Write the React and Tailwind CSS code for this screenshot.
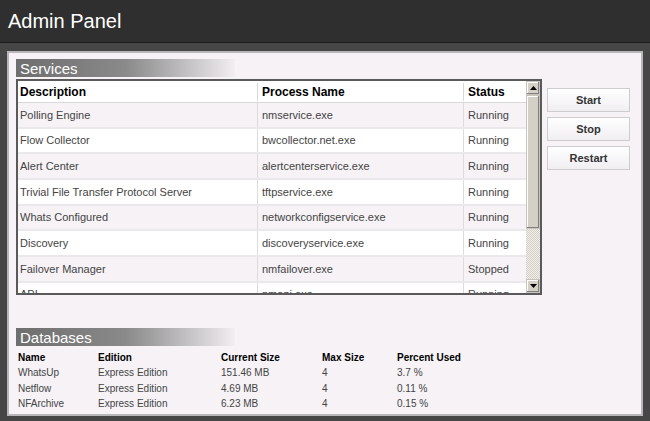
const services = [
  { name: 'Polling Engine', process: 'nmservice.exe', status: 'Running' },
  { name: 'Flow Collector', process: 'bwcollector.net.exe', status: 'Running' },
  { name: 'Alert Center', process: 'alertcenterservice.exe', status: 'Running' },
  { name: 'Trivial File Transfer Protocol Server', process: 'tftpservice.exe', status: 'Running' },
  { name: 'Whats Configured', process: 'networkconfigservice.exe', status: 'Running' },
  { name: 'Discovery', process: 'discoveryservice.exe', status: 'Running' },
  { name: 'Failover Manager', process: 'nmfailover.exe', status: 'Stopped' },
  { name: 'API', process: 'nmapi.exe', status: 'Running' },
]

const databases = [
  { name: 'WhatsUp', edition: 'Express Edition', size: '151.46 MB', max: '4', used: '3.7 %' },
  { name: 'Netflow', edition: 'Express Edition', size: '4.69 MB', max: '4', used: '0.11 %' },
  { name: 'NFArchive', edition: 'Express Edition', size: '6.23 MB', max: '4', used: '0.15 %' },
]

function SectionBar({ title }) {
  return (
    <div className="flex h-[18px] w-[219px] items-center bg-gradient-to-r from-[#6e6e6e] via-[#8a8a8a] to-[#f2eef2] pl-[4px] text-[15px] leading-none text-white">
      {title}
    </div>
  )
}

function ScrollArrow({ up }) {
  return (
    <div className="flex h-[14px] w-[14px] items-center justify-center border border-[#c8c4bc] bg-[#d4d0c8] shadow-[inset_-1px_-1px_0_#808080,inset_1px_1px_0_#fff]">
      <svg width="7" height="4" viewBox="0 0 7 4">
        <path d={up ? 'M0 4 L3.5 0 L7 4 Z' : 'M0 0 L3.5 4 L7 0 Z'} fill="#000" />
      </svg>
    </div>
  )
}

function ActionButton({ label }) {
  return (
    <button className="flex h-[24px] w-[83px] items-center justify-center border border-[#cfcccf] bg-gradient-to-b from-white to-[#f1eef1] text-[11px] font-bold text-[#333]">
      {label}
    </button>
  )
}

export default function App() {
  return (
    <div className="flex h-[421px] w-[650px] flex-col bg-[#464646] font-['Liberation_Sans',Arial,sans-serif]">
      <div className="flex h-[43px] items-center border-b border-[#1c1c1c] bg-[#2f2f2f] pl-[8px] text-[20px] text-white">
        Admin Panel
      </div>
      <div className="flex flex-1 flex-col px-[7px] pt-[8px] pb-[5px]">
        <div className="flex flex-1 flex-col border-2 border-[#b9b6b9] bg-[#f6f2f6] pl-[7px] pt-[6px]">
          <SectionBar title="Services" />
          <div className="mt-[2px] flex">
            <div className="flex h-[216px] w-[526px] border-2 border-[#5a5a5a] bg-white">
              <div className="flex-1 overflow-hidden text-[11px] text-[#444]">
                <div className="flex h-[22px] items-center border-b border-[#d8d8d8] text-[12px] font-bold text-black">
                  <div className="w-[239px] pl-[2px]">Description</div>
                  <div className="w-[206px] border-l border-[#d8d8d8] pl-[4px]">Process Name</div>
                  <div className="flex-1 border-l border-[#d8d8d8] pl-[4px]">Status</div>
                </div>
                {services.map((s, i) => (
                  <div
                    key={s.name}
                    className={`flex h-[25.67px] items-stretch border-b-2 border-[#ebe8eb] ${i % 2 === 0 ? 'bg-[#f6f2f6]' : 'bg-white'}`}
                  >
                    <div className="flex w-[239px] items-center pl-[2px]">{s.name}</div>
                    <div className="flex w-[206px] items-center border-l border-[#dcdcdc] pl-[4px]">{s.process}</div>
                    <div className="flex flex-1 items-center border-l border-[#dcdcdc] pl-[4px]">{s.status}</div>
                  </div>
                ))}
              </div>
              <div className="flex w-[14px] flex-col bg-[repeating-conic-gradient(#d4d0c8_0%_25%,#f0eee8_0%_50%)] bg-[length:2px_2px]">
                <ScrollArrow up />
                <div className="h-[134px] border border-[#c8c4bc] bg-[#d4d0c8] shadow-[inset_-1px_-1px_0_#808080,inset_1px_1px_0_#fff]" />
                <div className="flex-1" />
                <ScrollArrow />
              </div>
            </div>
            <div className="ml-[5px] mt-[9px] flex flex-col gap-[5px]">
              <ActionButton label="Start" />
              <ActionButton label="Stop" />
              <ActionButton label="Restart" />
            </div>
          </div>

          <div className="mt-[33px]">
            <SectionBar title="Databases" />
          </div>
          <div className="mt-[4px] text-[10px] text-[#444]">
            <div className="flex h-[15px] items-center font-bold text-black">
              <div className="w-[82px] pl-[2px]">Name</div>
              <div className="w-[123px]">Edition</div>
              <div className="w-[101px]">Current Size</div>
              <div className="w-[75px]">Max Size</div>
              <div>Percent Used</div>
            </div>
            {databases.map((d) => (
              <div key={d.name} className="flex h-[15.5px] items-center">
                <div className="w-[82px] pl-[2px]">{d.name}</div>
                <div className="w-[123px]">{d.edition}</div>
                <div className="w-[101px]">{d.size}</div>
                <div className="w-[75px]">{d.max}</div>
                <div>{d.used}</div>
              </div>
            ))}
          </div>
        </div>
      </div>
    </div>
  )
}
